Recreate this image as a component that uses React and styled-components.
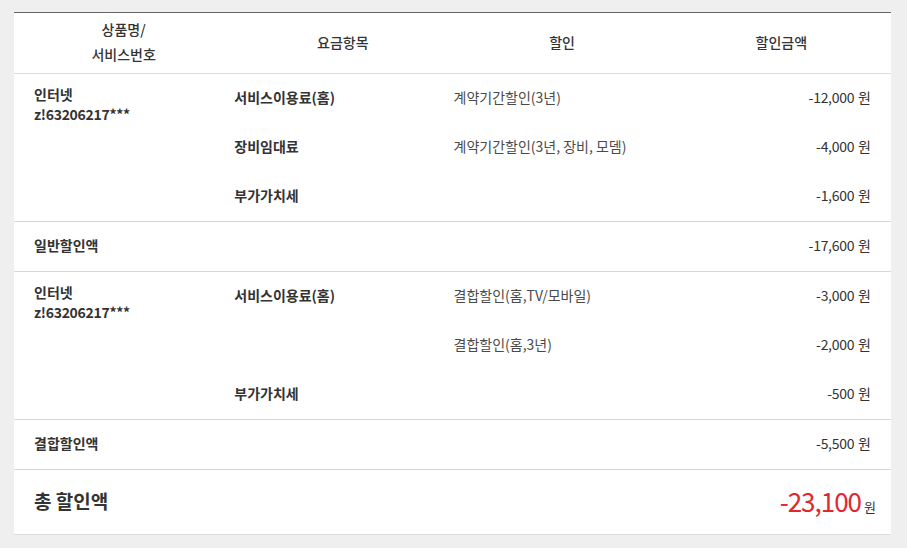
import React from 'react';
import styled, { createGlobalStyle } from "styled-components"

const GlobalStyle = createGlobalStyle`
    body {
        margin: 0;
        background: #efefef;
        font-family: "Noto Sans CJK KR", "Noto Sans", sans-serif;
        color: #333;
    }
`

const groups = [
    {
        product: "인터넷",
        number: "z!63206217***",
        lines: [
            { item: "서비스이용료(홈)", discount: "계약기간할인(3년)", amount: "-12,000" },
            { item: "장비임대료", discount: "계약기간할인(3년, 장비, 모뎀)", amount: "-4,000" },
            { item: "부가가치세", discount: "", amount: "-1,600" },
        ],
        summary: { label: "일반할인액", amount: "-17,600" },
    },
    {
        product: "인터넷",
        number: "z!63206217***",
        lines: [
            { item: "서비스이용료(홈)", discount: "결합할인(홈,TV/모바일)", amount: "-3,000" },
            { item: "", discount: "결합할인(홈,3년)", amount: "-2,000" },
            { item: "부가가치세", discount: "", amount: "-500" },
        ],
        summary: { label: "결합할인액", amount: "-5,500" },
    },
]

const App = () => (
    <Page>
        <GlobalStyle />
        <Panel>
            <Header>
                <HeadCell>상품명/<br />서비스번호</HeadCell>
                <HeadCell>요금항목</HeadCell>
                <HeadCell>할인</HeadCell>
                <HeadCell>할인금액</HeadCell>
            </Header>
            {groups.map((group, index) => (
                <React.Fragment key={index}>
                    <Group>
                        <Product rows={group.lines.length}>
                            <span>{group.product}</span>
                            <Number>{group.number}</Number>
                        </Product>
                        {group.lines.map((line, i) => (
                            <React.Fragment key={i}>
                                <Item>{line.item}</Item>
                                <Discount>{line.discount}</Discount>
                                <Amount>{line.amount}<Won>원</Won></Amount>
                            </React.Fragment>
                        ))}
                    </Group>
                    <Summary>
                        <SummaryLabel>{group.summary.label}</SummaryLabel>
                        <Amount>{group.summary.amount}<Won>원</Won></Amount>
                    </Summary>
                </React.Fragment>
            ))}
            <Total>
                <TotalLabel>총 할인액</TotalLabel>
                <TotalAmount>-23,100<Won small>원</Won></TotalAmount>
            </Total>
        </Panel>
    </Page>
)

const Page = styled.div`
    padding: 12px 16px 12px 14px;
`

const Panel = styled.div`
    background: #fff;
    border-top: 1px solid #666;
    border-bottom: 1px solid #ddd;
`

const Header = styled.div`
    display: grid;
    grid-template-columns: repeat(4, 1fr);
    height: 60px;
    border-bottom: 1px solid #ddd;
`

const HeadCell = styled.div`
    display: flex;
    align-items: center;
    justify-content: center;
    padding-bottom: 2px;
    text-align: center;
    font-size: 14px;
    line-height: 25px;
    font-weight: 500;
    color: #333;
`

const Group = styled.div`
    display: grid;
    grid-template-columns: repeat(4, 1fr);
    grid-auto-rows: 49px;
    border-bottom: 1px solid #d8d8d8;
`

const Product = styled.div`
    grid-row: 1 / span ${({ rows }) => rows};
    grid-column: 1;
    display: flex;
    flex-direction: column;
    padding: 10px 20px 0;
    font-size: 14px;
    line-height: 20px;
    font-weight: 700;
`

const Number = styled.span`
    letter-spacing: -0.3px;
`

const Cell = styled.div`
    display: flex;
    align-items: center;
    padding-bottom: 3px;
    font-size: 14px;
`

const Item = styled(Cell)`
    grid-column: 2;
    padding-left: 1px;
    font-weight: 700;
`

const Discount = styled(Cell)`
    grid-column: 3;
    padding-left: 1px;
    color: #4a4a4a;
`

const Amount = styled(Cell)`
    grid-column: 4;
    justify-content: flex-end;
    padding-right: 20px;
    letter-spacing: -0.3px;
    color: #333;
`

const Won = styled.span`
    margin-left: ${({ small }) => small ? "3px" : "4px"};
    font-size: ${({ small }) => small ? "13px" : "14px"};
    letter-spacing: 0;
    color: #333;
`

const Summary = styled.div`
    display: grid;
    grid-template-columns: repeat(4, 1fr);
    height: 49px;
    border-bottom: 1px solid #d8d8d8;
`

const SummaryLabel = styled(Cell)`
    padding-left: 20px;
    font-weight: 700;
`

const Total = styled.div`
    display: flex;
    align-items: center;
    justify-content: space-between;
    height: 64px;
    padding: 0 15px 3px 20px;
    box-sizing: border-box;
`

const TotalLabel = styled.div`
    font-size: 19px;
    font-weight: 700;
    color: #333;
`

const TotalAmount = styled.div`
    display: flex;
    align-items: baseline;
    font-size: 26px;
    letter-spacing: -1px;
    color: #e3262e;
`

export default App
